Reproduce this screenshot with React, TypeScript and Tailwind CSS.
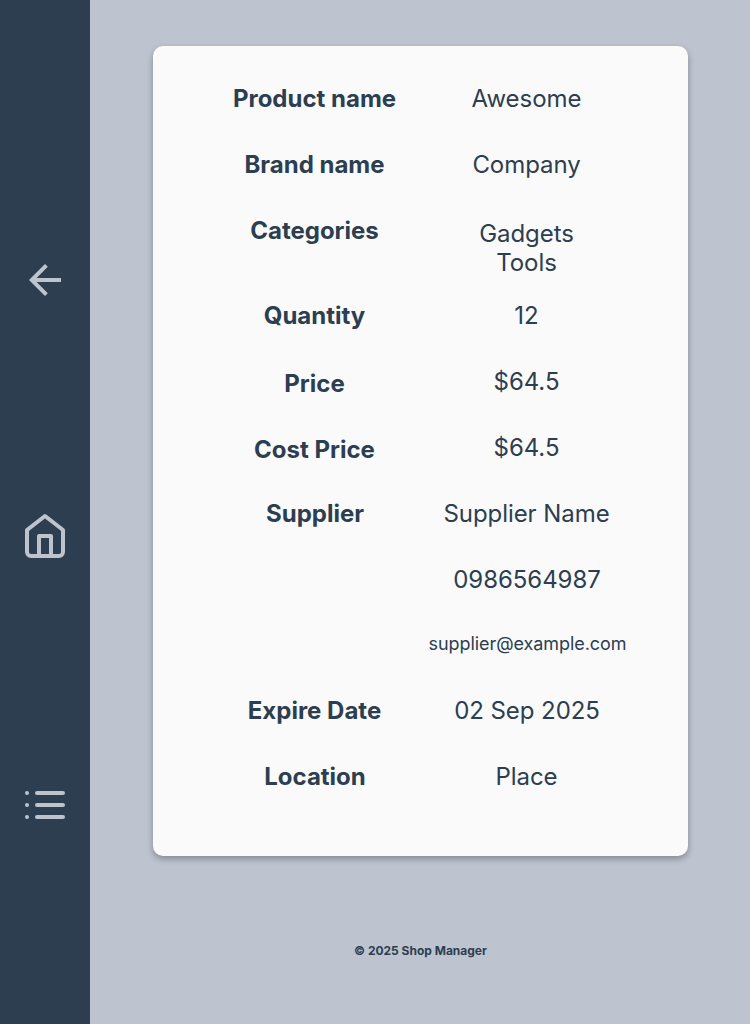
import React from "react";

const rows = [
  { label: "Product name", values: ["Awesome"], row: "h-[66px]", lab: "", val: "" },
  { label: "Brand name", values: ["Company"], row: "h-[66px]", lab: "", val: "" },
  { label: "Categories", values: ["Gadgets", "Tools"], row: "h-[85px]", lab: "", val: "pt-[3px]" },
  { label: "Quantity", values: ["12"], row: "h-[66px]", lab: "", val: "" },
  { label: "Price", values: ["$64.5"], row: "h-[66px]", lab: "pt-[2px]", val: "" },
  { label: "Cost Price", values: ["$64.5"], row: "h-[66px]", lab: "pt-[2px]", val: "" },
  { label: "Supplier", values: ["Supplier Name"], row: "h-[66px]", lab: "pl-px", val: "" },
  { label: "", values: ["0986564987"], row: "h-[66px]", lab: "", val: "pl-px" },
  { label: "", values: ["supplier@example.com"], row: "h-[65px]", lab: "", val: "text-[18px] leading-[26px] pl-[2px]" },
  { label: "Expire Date", values: ["02 Sep 2025"], row: "h-[66px]", lab: "", val: "pl-px" },
  { label: "Location", values: ["Place"], row: "h-[66px]", lab: "pl-px", val: "" },
];

export default function App() {
  return (
    <div className="flex h-[1024px] w-[750px] bg-[#bdc3cf] font-['Inter',sans-serif] text-[#2c3e50]">
      <nav className="flex w-[90px] shrink-0 flex-col items-center bg-[#2c3e50] text-[#bdc3cf]">
        <svg className="mt-[256px] h-12 w-12" viewBox="0 0 48 48" fill="none" stroke="currentColor" strokeWidth="4">
          <path d="M40 24H11M25.4 9.4 10.8 24l14.6 14.6" />
        </svg>
        <svg className="mt-[208px] h-12 w-12" viewBox="0 0 48 48" fill="none" stroke="currentColor" strokeWidth="4" strokeLinejoin="round">
          <path d="M6 18 24 4l18 14v22a4 4 0 0 1-4 4H10a4 4 0 0 1-4-4zM18 44V24h12v20" />
        </svg>
        <svg className="mt-[221px] h-12 w-12" viewBox="0 0 48 48" fill="none" stroke="currentColor" strokeWidth="4" strokeLinecap="round">
          <path d="M16 12h26M16 24h26M16 36h26M6 12h.01M6 24h.01M6 36h.01" />
        </svg>
      </nav>
      <main className="flex flex-1 flex-col pl-[63px] pt-[46px]">
        <section className="h-[810px] w-[535px] rounded-[10px] bg-[#fafafa] pl-[60px] pt-[38px] shadow-[0_3px_6px_rgba(0,0,0,0.3)]">
          {rows.map((r, i) => (
            <div key={i} className={`flex text-center text-[24px] leading-[29px] ${r.row}`}>
              <div className={`w-[203px] font-bold ${r.lab}`}>{r.label}</div>
              <div className={`w-[221px] font-normal tracking-[-0.06px] ${r.val}`}>
                {r.values.map((v) => <div key={v}>{v}</div>)}
              </div>
            </div>
          ))}
        </section>
        <footer className="mt-[87px] w-[535px] text-center text-[12px] font-bold leading-[15px]">© 2025 Shop Manager</footer>
      </main>
    </div>
  );
}
